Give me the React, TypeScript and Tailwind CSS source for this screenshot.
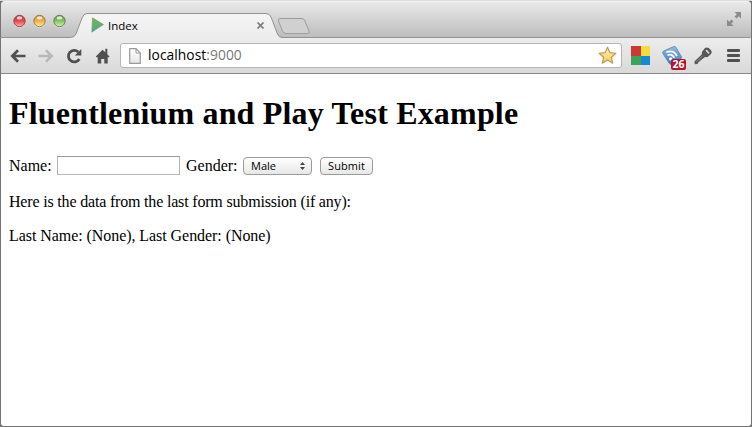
import React from "react";

function TrafficLights() {
  const lights = [
    { id: "close", top: "#b5373b", mid: "#e9484c", low: "#ffb3a8", rim: "#8c3a3c" },
    { id: "minimise", top: "#c58a2c", mid: "#f0b048", low: "#ffec9c", rim: "#94713a" },
    { id: "zoom", top: "#5f9a45", mid: "#86c263", low: "#d5f5a9", rim: "#56753f" },
  ];
  return (
    <div className="flex gap-[7px] pl-[11.5px] pt-[12px]">
      {lights.map((l) => (
        <svg key={l.id} width="13" height="14" viewBox="0 0 13 14">
          <defs>
            <linearGradient id={l.id} x1="0" y1="0" x2="0" y2="1">
              <stop offset="0" stopColor={l.top} />
              <stop offset=".5" stopColor={l.mid} />
              <stop offset="1" stopColor={l.low} />
            </linearGradient>
          </defs>
          <circle cx="6.5" cy="7.6" r="6.200" fill="#fff" opacity=".5" />
          <circle cx="6.5" cy="7" r="5.700" fill={`url(#${l.id})`} stroke={l.rim} strokeWidth=".9" />
          <ellipse cx="6.5" cy="3.9" rx="2.8" ry="1.6" fill="#fff" opacity=".75" />
        </svg>
      ))}
    </div>
  );
}

function TabStrip() {
  return (
    <div className="flex h-[37px] rounded-t-[4px] border-t border-[#f4f4f4] bg-linear-to-b from-[#e9e9e9] to-[#bcbcbc]">
      <TrafficLights />
      <div className="relative ml-[5.5px] h-[36px] w-[244px]">
        <svg className="absolute -left-[71px] top-0" width="750" height="36" viewBox="0 0 750 36">
          <defs>
            <linearGradient id="tab" x1="0" y1="0" x2="0" y2="1">
              <stop offset="0" stopColor="#f5f5f5" />
              <stop offset="1" stopColor="#ececec" />
            </linearGradient>
          </defs>
          <path d="M0 35.5H70Q74.500 35.500 76 32L82 16Q83.500 11.500 87 11.500H266Q269.500 11.500 271 15L277.500 32Q279 35.500 282 35.500H750V36H0Z" fill="url(#tab)" />
          <path d="M0 35.500H70Q74.500 35.500 76 32L82 16Q83.500 11.500 87 11.500H266Q269.500 11.500 271 15L277.500 32Q279 35.500 282 35.500H750" fill="none" stroke="#929292" />
          <path d="M280 16.500H302Q304 16.500 305 19L309 29Q310 31.500 307.500 31.500H286Q283.500 31.500 282.500 29L278.500 19Q277.500 16.500 280 16.500Z" fill="#d0d0d0" stroke="#9d9d9d" />
        </svg>
        <div className="relative mt-[11px] flex h-[25px] items-center pl-[20px]">
          <svg className="-mt-[1px]" width="13" height="16" viewBox="0 0 13 16">
            <defs>
              <linearGradient id="play" x1="0" y1="0" x2="0" y2="1">
                <stop offset="0" stopColor="#78b547" />
                <stop offset="1" stopColor="#51a3a0" />
              </linearGradient>
            </defs>
            <path d="M1.500 .8 12.500 7.500 .800 15.200Z" fill="url(#play)" stroke="#5c9661" strokeWidth=".5" />
          </svg>
          <span className="ml-[4px] w-[148px] text-[11.500px] leading-[14px] text-black">Index</span>
          <svg width="9" height="9" viewBox="0 0 9 9">
            <path d="m1.500 1.500 6 6m0-6-6 6" stroke="#777" strokeWidth="1.700" />
          </svg>
        </div>
      </div>
      <svg className="ml-auto mr-[9px] mt-[9px]" width="16" height="16" viewBox="0 0 16 16" fill="#8b8b8b">
        <path d="M8.500 1H15V7.500L12.700 5.200 10.500 7.500 8.500 5.500 10.800 3.300Z" />
        <path d="M7.500 15H1V8.500L3.300 10.800 5.500 8.500 7.500 10.500 5.200 12.700Z" />
      </svg>
    </div>
  );
}

function Toolbar() {
  return (
    <div className="flex h-[36px] items-center border-b border-[#858585] bg-linear-to-b from-[#ededed] to-[#d9d9d9]">
      <svg className="ml-[9px]" width="16" height="14" viewBox="0 0 16 14" fill="none" stroke="#505050" strokeWidth="2.700">
        <path d="M8 1.300 2.300 7 8 12.700M2.500 7H15.500" />
      </svg>
      <svg className="ml-[12px]" width="16" height="14" viewBox="0 0 16 14" fill="none" stroke="#b8b8b8" strokeWidth="2.500">
        <path d="m8 1.300 5.700 5.700L8 12.700M13.500 7H.5" />
      </svg>
      <svg className="ml-[12px]" width="16" height="16" viewBox="0 0 16 16">
        <path d="M12.300 4A5.800 5.800 0 1 0 13.300 11" fill="none" stroke="#505050" strokeWidth="2.800" />
        <path d="M15.300 1V7.500H8.800Z" fill="#505050" />
      </svg>
      <svg className="ml-[13px]" width="16" height="16" viewBox="0 0 16 16" fill="#505050">
        <path d="M7.500 1.700.800 8.400 2 9.600 2.700 9V15.500H6.200V11H9.300V15.500H12.700V9L13.300 9.600 14.500 8.400 12.300 6.200V.800H10.300V4.300Z" />
      </svg>
      <div className="ml-[9px] flex h-[25px] w-[502px] items-center rounded-[3px] border border-[#b5b5b5] bg-white">
        <svg className="ml-[8px]" width="12" height="16" viewBox="0 0 12 16">
          <defs>
            <linearGradient id="page" x1="0" y1="0" x2="0" y2="1">
              <stop offset="0" stopColor="#fff" />
              <stop offset="1" stopColor="#e6e6e6" />
            </linearGradient>
          </defs>
          <path d="M.7.700H7L11.300 5V15.300H.7Z" fill="url(#page)" stroke="#9a9a9a" strokeWidth="1.200" />
          <path d="M7 .7V5H11.300" fill="none" stroke="#9a9a9a" />
        </svg>
        <span className="-mt-[1px] ml-[7px] text-[13.800px] leading-[18px] tracking-[0.06px] text-black">
          localhost<span className="text-[#777]">:9000</span>
        </span>
        <svg className="ml-auto mr-[4px]" width="19" height="19" viewBox="0 0 19 19">
          <defs>
            <linearGradient id="star" x1="0" y1="0" x2="0" y2="1">
              <stop offset="0" stopColor="#fff5b8" />
              <stop offset="1" stopColor="#f6cb5f" />
            </linearGradient>
          </defs>
          <path d="m9.500 1.200 2.400 5.500 6 .6-4.500 4 1.300 5.900-5.200-3.100-5.200 3.100 1.300-5.900-4.500-4 6-.6Z" fill="url(#star)" stroke="#c4984f" strokeWidth="1.200" strokeLinejoin="round" />
        </svg>
      </div>
      <div className="ml-[9px] grid h-[19px] w-[19px] grid-cols-2">
        <span className="bg-[#cb3839]" />
        <span className="bg-[#f6dc3b]" />
        <span className="bg-[#3ca45a]" />
        <span className="bg-[#168bd0]" />
      </div>
      <div className="relative ml-[12px] h-[20px] w-[24px]">
        <svg width="22" height="20" viewBox="0 0 22 20">
          <defs>
            <linearGradient id="feed" x1="0" y1="0" x2="0" y2="1">
              <stop offset="0" stopColor="#93bde4" />
              <stop offset="1" stopColor="#3479bd" />
            </linearGradient>
          </defs>
          <path d="M2.200 4.700 11.500.700q1.700-.6 2.600.8l5.200 9q.8 1.600-.7 2.500L10 18.300q-1.600.8-2.700-.7L.900 7.500q-1-1.900 1.300-2.800Z" fill="url(#feed)" stroke="#4f85b6" strokeWidth=".8" />
          <circle cx="8.600" cy="12.800" r="1.600" fill="#fff" />
          <path d="M5.500 9.200q4.700-1.900 6.700 2.600M4.400 6.200q7.300-2.800 10.600 4" fill="none" stroke="#fff" strokeWidth="1.700" />
        </svg>
        <span className="absolute left-[9px] top-[13px] flex h-[11px] w-[15px] items-center justify-center rounded-[2px] bg-[#b6122a] text-[10.500px] font-bold leading-none text-white">26</span>
      </div>
      <svg className="ml-[8px]" width="18" height="18" viewBox="0 0 18 18">
        <path d="M8 4.700 11 1Q12.800-.2 14.700 1L17.200 3.500Q18.200 5.300 17 7L13.700 9.900 10.300 10.300 8.700 11.900 7.900 11.700 7.800 12.800 6.500 13 6.300 14.300 5 14.500 3.400 17 .8 17.300 .400 14.500 7.700 7.400Z" fill="#585858" />
        <path d="m12.500 3.700 2.100 2.100" stroke="#d8d8d8" strokeWidth="1.700" strokeLinecap="round" />
        <path d="m2.500 14.800 6-6" stroke="#999" strokeWidth=".8" />
      </svg>
      <div className="ml-[15px] flex flex-col gap-[2px]">
        <span className="h-[3px] w-[13px] rounded-[1px] bg-[#505050]" />
        <span className="h-[3px] w-[13px] rounded-[1px] bg-[#505050]" />
        <span className="h-[3px] w-[13px] rounded-[1px] bg-[#505050]" />
      </div>
    </div>
  );
}

function Page() {
  return (
    <main className="flex-1 rounded-b-[3px] bg-white px-[8px] font-['Liberation_Serif',serif] text-[16px] leading-[18px] text-black">
      <h1 className="pt-[21px] text-[32px] font-bold leading-[37px] tracking-[0.18px]">Fluentlenium and Play Test Example</h1>
      <form className="mt-[24px] flex h-[20px] items-center">
        <label className="w-[42px] whitespace-nowrap">Name:</label>
        <span className="-mt-[1px] ml-[6px] h-[19px] w-[123px] border border-t-[#9c9c9c] border-x-[#b4b4b4] border-b-[#b9b9b9] bg-white" />
        <label className="ml-[6px] w-[52px] whitespace-nowrap">Gender:</label>
        <button type="button" className="ml-[5px] flex h-[18px] w-[69px] items-center justify-between rounded-[4px] border border-[#9b9b9b] bg-linear-to-b from-white to-[#e7e7e7] pl-[7px] pr-[6px] font-['Open_Sans',sans-serif] text-[11px] leading-[14px]">
          Male
          <svg width="5" height="8" viewBox="0 0 5 8" fill="#444">
            <path d="M2.500 0 5 3H0ZM2.500 8 0 5H5Z" />
          </svg>
        </button>
        <button type="button" className="ml-[8px] flex h-[18px] w-[53px] items-center justify-center rounded-[4px] border border-[#9b9b9b] bg-linear-to-b from-white to-[#e7e7e7] font-['Open_Sans',sans-serif] text-[11px] leading-[14px] tracking-[0.1px]">
          Submit
        </button>
      </form>
      <p className="mt-[17px] tracking-[-0.18px]">Here is the data from the last form submission (if any):</p>
      <p className="mt-[16px] tracking-[-0.06px]">Last Name: (None), Last Gender: (None)</p>
    </main>
  );
}

export default function App() {
  return (
    <div className="flex h-[427px] w-[752px] flex-col overflow-hidden bg-[#747474] font-['Open_Sans',sans-serif]">
      <div className="h-px bg-[#dcdcdc]" />
      <div className="flex flex-1 flex-col px-px pb-px">
        <TabStrip />
        <Toolbar />
        <Page />
      </div>
    </div>
  );
}
